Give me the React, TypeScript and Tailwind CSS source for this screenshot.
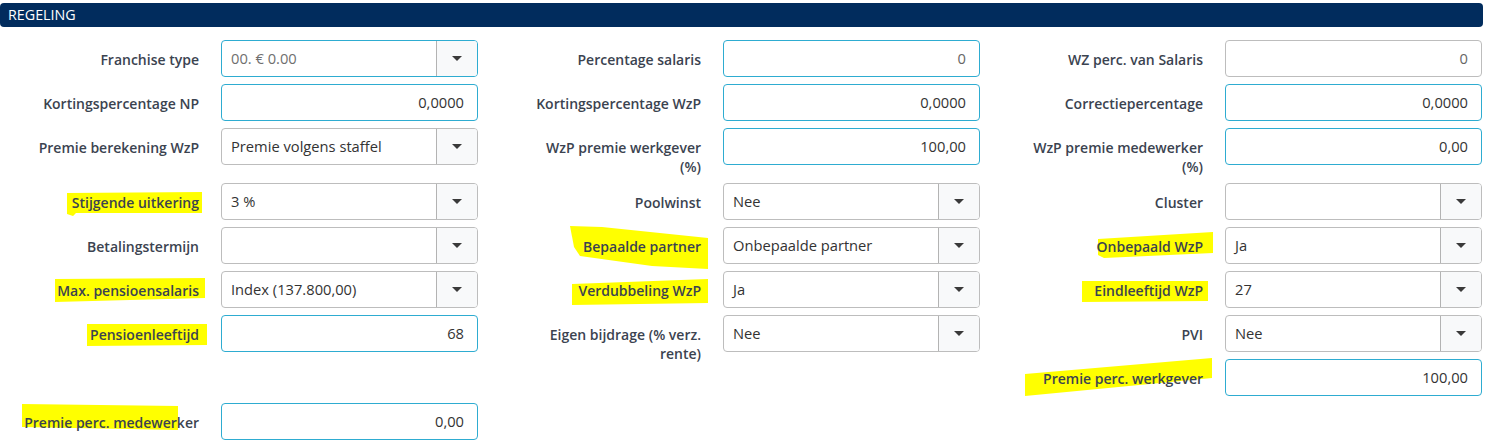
import React from "react";

type FieldProps = {
    label: string;
    value?: string;
    select?: boolean;
    teal?: boolean;
    muted?: boolean;
    tall?: boolean;
    hl?: string;
};

// Yellow marker stroke behind a label, points relative to the field box
function Highlight({ points }: { points: string }) {
    return (
        <svg className="pointer-events-none absolute left-0 top-0 overflow-visible" width="220" height="48">
            <polygon points={points} fill="#ffff00" />
        </svg>
    );
}

function Field({ label, value = "", select, teal, muted, tall, hl }: FieldProps) {
    const border = teal ? "border-[#2eacd1]" : "border-[#bdbdbd]";
    return (
        <div className={`relative flex items-start ${tall ? "min-h-[48px]" : "min-h-[37px]"}`}>
            {hl && <Highlight points={hl} />}
            <div className="relative z-10 w-[199px] shrink-0 pl-[23px] pt-[10px] text-right text-[14px] font-semibold leading-[19px] text-[#3b4350]">
                {label}
            </div>
            <div className={`ml-[22px] flex h-[37px] w-[257px] shrink-0 items-center rounded-[4px] border bg-white ${border}`}>
                {select ? (
                    <>
                        <div className={`flex-1 truncate pl-[9px] text-[14.7px] ${muted ? "text-[#6f6f6f]" : "text-[#333333]"}`}>
                            {value}
                        </div>
                        <div className="flex h-full w-[41px] items-center justify-center rounded-r-[3px] border-l border-[#b3b3b3] bg-[#f8f9fa]">
                            <div className="h-0 w-0 border-x-[5px] border-t-[5px] border-x-transparent border-t-[#3a3a3a]" />
                        </div>
                    </>
                ) : (
                    <div className={`flex-1 pr-[13px] text-right text-[14.7px] ${muted ? "text-[#666666]" : "text-[#333333]"}`}>
                        {value}
                    </div>
                )}
            </div>
        </div>
    );
}

export default function App() {
    return (
        <div className="min-h-screen bg-white font-['Open_Sans',sans-serif]">
            {/* Section header */}
            <div className="pt-[3px]">
                <div className="flex h-[24px] w-[1483px] items-center rounded-[4px] bg-[#012c5d] pl-[8px] text-[14.3px] text-white">
                    REGELING
                </div>
            </div>

            <div className="mt-[13px] flex">
                {/* Column 1 */}
                <div className="flex w-[502px] flex-col gap-[7px]">
                    <Field label="Franchise type" value="00. € 0.00" select teal muted />
                    <Field label="Kortingspercentage NP" value="0,0000" teal />
                    <Field label="Premie berekening WzP" value="Premie volgens staffel" select tall />
                    <Field label="Stijgende uitkering" value="3 %" select hl="67,10 202,9 202,30 76,30 73,33 67,31" />
                    <Field label="Betalingstermijn" select />
                    <Field label="Max. pensioensalaris" value="Index (137.800,00)" select hl="55,8 205,7 205,27 55,31" />
                    <Field label="Pensioenleeftijd" value="68" teal hl="87,9 207,9 207,30 87,31" />
                    <div className="h-[37px]" />
                    <Field label="Premie perc. medewerker" value="0,00" teal hl="22,1 178,3 178,27 22,24" />
                </div>

                {/* Column 2 */}
                <div className="flex w-[502px] flex-col gap-[7px]">
                    <Field label="Percentage salaris" value="0" teal muted />
                    <Field label="Kortingspercentage WzP" value="0,0000" teal />
                    <Field label="WzP premie werkgever (%)" value="100,00" teal />
                    <Field label="Poolwinst" value="Nee" select />
                    <Field label="Bepaalde partner" value="Onbepaalde partner" select hl="68,-1 100,0 206,11 206,42 150,39 78,29 72,20" />
                    <Field label="Verdubbeling WzP" value="Ja" select hl="70,13 206,8 206,32 70,34" />
                    <Field label="Eigen bijdrage (% verz. rente)" value="Nee" select />
                </div>

                {/* Column 3 */}
                <div className="flex w-[483px] flex-col gap-[7px]">
                    <Field label="WZ perc. van Salaris" value="0" muted />
                    <Field label="Correctiepercentage" value="0,0000" teal />
                    <Field label="WzP premie medewerker (%)" value="0,00" teal />
                    <Field label="Cluster" select />
                    <Field label="Onbepaald WzP" value="Ja" select hl="94,12 209,5 209,26 100,31 94,28" />
                    <Field label="Eindleeftijd WzP" value="27" select hl="78,10 204,10 204,30 78,31" />
                    <Field label="PVI" value="Nee" select />
                    <Field label="Premie perc. werkgever" value="100,00" teal hl="21,15 208,-1 208,19 21,37" />
                </div>
            </div>
        </div>
    );
}
